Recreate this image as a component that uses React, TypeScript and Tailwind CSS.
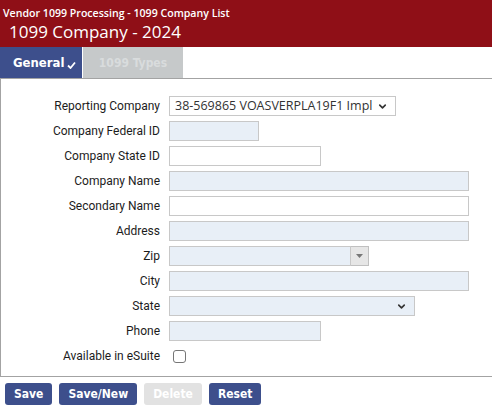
import React from 'react'
import { ChevronDown } from 'lucide-react'

const labelCls = 'w-[168px] pr-[9px] text-right text-[12px] text-[#1c1c1c] shrink-0'
const boxCls = 'h-[20px] border border-[#c8c8c8] bg-[#e8eff7]'

const Row = ({ label, children }: { label: string; children: React.ReactNode }) => (
  <div className="flex items-center h-[20px]">
    <div className={labelCls}>{label}</div>
    {children}
  </div>
)

const Btn = ({ children, disabled }: { children: React.ReactNode; disabled?: boolean }) => (
  <button
    className={
      'h-[22px] px-[9px] rounded-[3px] text-[12px] font-bold text-white ' +
      (disabled ? 'bg-[#e2e2e2] text-[#f6f6f6]' : 'bg-[#3d4f8c]')
    }
    style={{ fontFamily: '"DejaVu Sans Condensed", "DejaVu Sans", sans-serif' }}
  >
    {children}
  </button>
)

export default function App() {
  return (
    <div className="w-[492px] h-[411px] bg-white overflow-hidden" style={{ fontFamily: 'Roboto, sans-serif' }}>
      <div className="h-[47px] bg-[#8f0f17] text-white pl-[3px] pt-[6px]" style={{ fontFamily: '"Open Sans", sans-serif' }}>
        <div className="text-[10.6px] font-semibold leading-[14px]">Vendor 1099 Processing - 1099 Company List</div>
        <div className="text-[17px] leading-[24px] pl-[6px]">1099 Company - 2024</div>
      </div>

      <div className="flex h-[31px]" style={{ fontFamily: '"DejaVu Sans Condensed", "DejaVu Sans", sans-serif' }}>
        <div className="w-[82px] bg-[#3d4f8c] text-white text-[13px] font-bold flex items-center pl-[13px] gap-[3px]">
          General
          <svg width="9" height="8" viewBox="0 0 9 8" className="mt-[4px]">
            <path d="M1 4.5 L3.5 7 L8 1.5" stroke="white" strokeWidth="1.8" fill="none" />
          </svg>
        </div>
        <div className="w-[100px] ml-[1px] bg-[#c6c9ca] text-[#d9dcdd] text-[12px] font-bold flex items-center justify-center">
          1099 Types
        </div>
      </div>

      <div className="border-t border-l border-b border-[#a3a3a3] pt-[17px] pb-[10px] flex flex-col gap-[5px]">
        <Row label="Reporting Company">
          <div className="w-[227px] h-[20px] border border-[#c8c8c8] bg-white flex items-center justify-between pl-[5px] pr-[7px]" style={{ fontFamily: '"Open Sans", sans-serif' }}>
            <span className="text-[12.5px] text-[#333]">38-569865 VOASVERPLA19F1 Impl</span>
            <ChevronDown size={11} strokeWidth={3.5} color="#333" />
          </div>
        </Row>
        <Row label="Company Federal ID"><div className={boxCls + ' w-[90px]'} /></Row>
        <Row label="Company State ID"><div className="h-[20px] w-[152px] border border-[#c8c8c8] bg-white" /></Row>
        <Row label="Company Name"><div className={boxCls + ' w-[300px]'} /></Row>
        <Row label="Secondary Name"><div className="h-[20px] w-[300px] border border-[#c8c8c8] bg-white" /></Row>
        <Row label="Address"><div className={boxCls + ' w-[300px]'} /></Row>
        <Row label="Zip">
          <div className="flex w-[200px] h-[20px]">
            <div className="flex-1 border border-[#c8c8c8] bg-[#e8eff7]" />
            <div className="w-[18px] border border-l-0 border-[#c0c0c0] bg-[#e6e6e6] flex items-center justify-center">
              <svg width="7" height="4" viewBox="0 0 7 4"><path d="M0 0 H7 L3.5 4 Z" fill="#777" /></svg>
            </div>
          </div>
        </Row>
        <Row label="City"><div className={boxCls + ' w-[300px]'} /></Row>
        <Row label="State">
          <div className={boxCls + ' w-[246px] flex items-center justify-end pr-[7px]'}>
            <ChevronDown size={11} strokeWidth={3.5} color="#333" />
          </div>
        </Row>
        <Row label="Phone"><div className={boxCls + ' w-[152px]'} /></Row>
        <Row label="Available in eSuite">
          <div className="ml-[4px] w-[13px] h-[13px] border border-[#767676] rounded-[3px] bg-white" />
        </Row>
      </div>

      <div className="flex gap-[7px] pl-[5px] pt-[6px]">
        <Btn>Save</Btn>
        <Btn>Save/New</Btn>
        <Btn disabled>Delete</Btn>
        <Btn>Reset</Btn>
      </div>
    </div>
  )
}
